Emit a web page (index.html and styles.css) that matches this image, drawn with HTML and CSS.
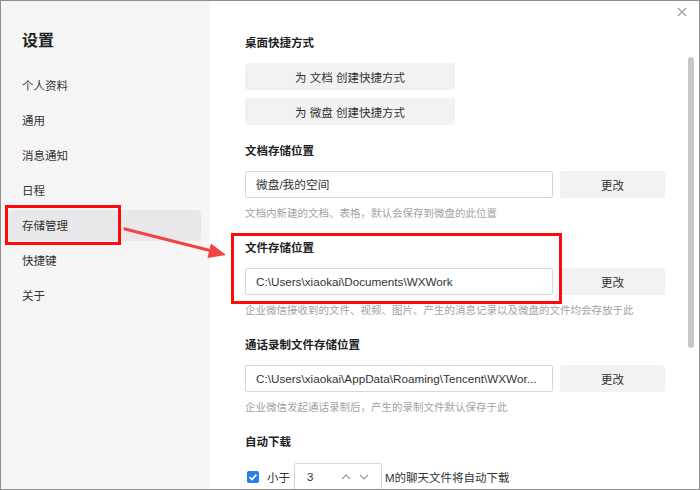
FILE: index.html
```html
<!DOCTYPE html>
<html lang="zh-CN">

<head>
  <meta charset="UTF-8" />
  <meta name="viewport" content="width=device-width, initial-scale=1.0" />
  <title>设置 • 存储管理</title>
  <link rel="stylesheet" href="styles.css">
</head>

<body>

  <div class="window">

    <!-- left menu -->
    <div class="sidebar">
      <h2 class="side-title">设置</h2>
      <div class="menu">
        <div class="menu-item">个人资料</div>
        <div class="menu-item">通用</div>
        <div class="menu-item">消息通知</div>
        <div class="menu-item">日程</div>
        <div class="menu-item active">存储管理</div>
        <div class="menu-item">快捷键</div>
        <div class="menu-item">关于</div>
      </div>
    </div>

    <!-- settings panel -->
    <div class="content">
      <div class="section">
        <div class="sec-title">桌面快捷方式</div>
        <div class="shortcut-list">
          <button class="shortcut-btn">为 文档 创建快捷方式</button>
          <button class="shortcut-btn">为 微盘 创建快捷方式</button>
        </div>
      </div>

      <div class="section">
        <div class="sec-title">文档存储位置</div>
        <div class="path-row">
          <div class="path-box">微盘/我的空间</div>
          <button class="change-btn">更改</button>
        </div>
        <div class="hint">文档内新建的文档、表格，默认会保存到微盘的此位置</div>
      </div>

      <div class="section">
        <div class="sec-title">文件存储位置</div>
        <div class="path-row">
          <div class="path-box">C:\Users\xiaokai\Documents\WXWork</div>
          <button class="change-btn">更改</button>
        </div>
        <div class="hint">企业微信接收到的文件、视频、图片、产生的消息记录以及微盘的文件均会存放于此</div>
      </div>

      <div class="section">
        <div class="sec-title">通话录制文件存储位置</div>
        <div class="path-row">
          <div class="path-box">C:\Users\xiaokai\AppData\Roaming\Tencent\WXWor...</div>
          <button class="change-btn">更改</button>
        </div>
        <div class="hint">企业微信发起通话录制后，产生的录制文件默认保存于此</div>
      </div>

      <div class="section">
        <div class="sec-title">自动下载</div>
        <div class="auto-row">
          <span class="check">
            <svg width="12" height="12" viewBox="0 0 12 12">
              <path d="M2.6 6.2 L5 8.5 L9.4 3.6" fill="none" stroke="#fff" stroke-width="1.6" />
            </svg>
          </span>
          <span class="auto-label">小于</span>
          <div class="spin">
            <span class="spin-val">3</span>
            <svg class="spin-arrows" width="28" height="8" viewBox="0 0 28 8">
              <path d="M1 6 L5 2 L9 6" fill="none" stroke="#9a9a9a" stroke-width="1.1" />
              <path d="M19 2 L23 6 L27 2" fill="none" stroke="#9a9a9a" stroke-width="1.1" />
            </svg>
          </div>
          <span class="auto-label">M的聊天文件将自动下载</span>
        </div>
      </div>

      <div class="scrollbar"></div>
      <svg class="close-btn" width="10" height="10" viewBox="0 0 10 10">
        <path d="M1 1 L9 9 M9 1 L1 9" stroke="#9c9c9c" stroke-width="1.1" />
      </svg>
    </div>

    <!-- red annotation marks -->
    <div class="mark mark-menu"></div>
    <div class="mark mark-file"></div>
    <svg class="mark-arrow" width="700" height="490" viewBox="0 0 700 490">
      <line x1="125" y1="229" x2="212" y2="251" stroke="#f14343" stroke-width="3.2" stroke-linecap="round" />
      <polygon points="226,255 211,243.5 207.5,258" fill="#f14343" />
    </svg>
  </div>

</body>
</html>
```

FILE: styles.css
```css
* {
  box-sizing: border-box;
  font-family: "Liberation Sans", "Noto Sans CJK SC", sans-serif;
}

body {
  margin: 0;
  background: #fff;
}

.window {
  position: relative;
  width: 700px;
  height: 490px;
  border: 1px solid #8e8e8e;
  display: flex;
  overflow: hidden;
  background: #fff;
}

/* sidebar */

.sidebar {
  width: 209px;
  background: #f5f5f5;
  padding-top: 30px;
}

.side-title {
  margin: 0 0 19px 21px;
  font-size: 16px;
  line-height: 20px;
  font-weight: bold;
  color: #1f1f1f;
}

.menu {
  display: flex;
  flex-direction: column;
  gap: 4px;
  padding: 0 9px 0 7px;
}

.menu-item {
  height: 31px;
  line-height: 33px;
  padding-left: 14px;
  font-size: 11.5px;
  color: #333;
  border-radius: 4px;
}

.menu-item.active {
  background: #e8e8ea;
}

/* main panel */

.content {
  position: relative;
  flex: 1;
  padding: 34px 0 0 35px;
}

.section {
  margin-bottom: 20px;
}

.sec-title {
  font-size: 11.5px;
  line-height: 16px;
  font-weight: bold;
  color: #222;
  margin-bottom: 12px;
}

.shortcut-list {
  display: flex;
  flex-direction: column;
  gap: 8px;
  margin-bottom: -2px;
}

.shortcut-btn {
  width: 210px;
  height: 27px;
  border: none;
  border-radius: 3px;
  background: #f2f2f2;
  font-size: 11.5px;
  color: #333;
}

.path-row {
  display: flex;
  gap: 7px;
  margin-top: 1px;
}

.path-box {
  width: 308px;
  height: 27px;
  line-height: 25px;
  border: 1px solid #d8d8d8;
  border-radius: 2px;
  padding: 0 2px 0 10px;
  font-size: 11.7px;
  color: #333;
  white-space: nowrap;
  overflow: hidden;
}

.change-btn {
  width: 105px;
  height: 27px;
  border: none;
  border-radius: 3px;
  background: #f2f2f2;
  font-size: 11.5px;
  color: #333;
}

.hint {
  margin-top: 8px;
  font-size: 10.5px;
  line-height: 14px;
  color: #a3a3a3;
}

.auto-row {
  display: flex;
  align-items: center;
  margin-top: 13px;
  padding-left: 2px;
}

.check {
  width: 12px;
  height: 12px;
  border-radius: 2px;
  background: #2a7ee5;
  display: flex;
  margin-right: 8px;
}

.auto-label {
  font-size: 11.5px;
  color: #333;
}

.spin {
  width: 88px;
  height: 27px;
  margin: 0 3px 0 4px;
  border: 1px solid #d8d8d8;
  border-radius: 2px;
  display: flex;
  align-items: center;
  justify-content: space-between;
  padding: 0 12px 0 12px;
}

.spin-val {
  font-size: 11.5px;
  color: #333;
}

/* overlays */

.scrollbar {
  position: absolute;
  top: 56px;
  right: 5px;
  width: 6px;
  height: 291px;
  border-radius: 3px;
  background: #c8c8c8;
}

.close-btn {
  position: absolute;
  top: 6px;
  right: 12px;
}

.mark {
  position: absolute;
  border: 3px solid #ff0a0a;
}

.mark-menu {
  left: 4px;
  top: 204px;
  width: 116px;
  height: 40px;
}

.mark-file {
  left: 230px;
  top: 232px;
  width: 331px;
  height: 71px;
}

.mark-arrow {
  position: absolute;
  left: -1px;
  top: -1px;
  pointer-events: none;
}
```
